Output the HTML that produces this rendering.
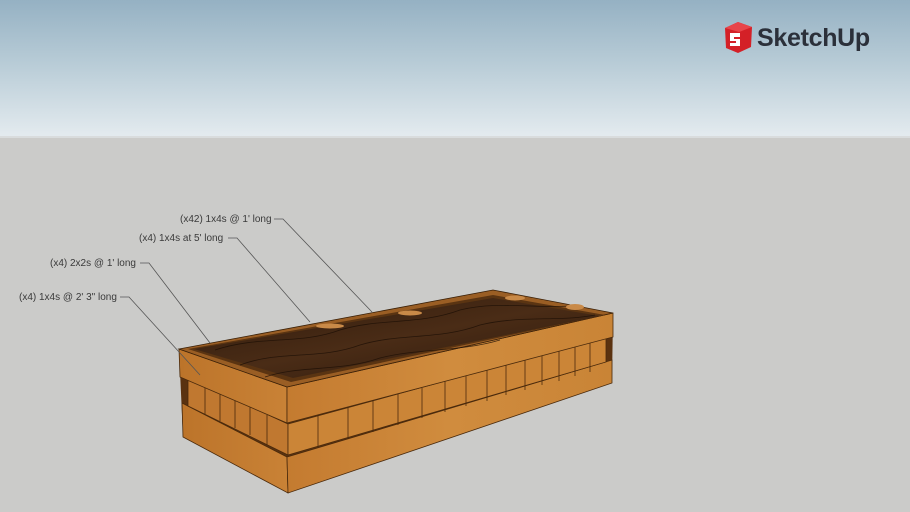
<!DOCTYPE html>
<html><head><meta charset="utf-8"><style>
html,body{margin:0;padding:0;width:910px;height:512px;overflow:hidden}
body{position:relative;background:#cbcbc9;font-family:"Liberation Sans",sans-serif}
.sky{position:absolute;left:0;top:0;width:910px;height:137px;background:linear-gradient(#95b1c3,#b7cbd6 45%,#e4ebef)}
.hz{position:absolute;left:0;top:136px;width:910px;height:2px;background:#d9dcdd}
.lbl{position:absolute;font-size:10px;color:#3a3a3a;white-space:nowrap;line-height:12px;font-family:"Liberation Sans",sans-serif}
.logo{position:absolute;left:757px;top:23px;font-family:"Liberation Sans",sans-serif;font-weight:bold;font-size:25px;line-height:30px;color:#2b303a;letter-spacing:-0.3px}
</style></head><body>
<div class="sky"></div><div class="hz"></div>
<svg width="910" height="512" style="position:absolute;left:0;top:0">
<defs>
<linearGradient id="wf" x1="0" y1="0" x2="1" y2="0"><stop offset="0" stop-color="#c47b30"/><stop offset="0.5" stop-color="#d08c3e"/><stop offset="1" stop-color="#c98436"/></linearGradient>
<linearGradient id="wl" x1="0" y1="0" x2="1" y2="0"><stop offset="0" stop-color="#bc742a"/><stop offset="1" stop-color="#c98236"/></linearGradient>
<linearGradient id="soil" x1="0" y1="0" x2="1" y2="1"><stop offset="0" stop-color="#2e1a0c"/><stop offset="0.5" stop-color="#4a2c16"/><stop offset="1" stop-color="#2a170a"/></linearGradient>
</defs>
<!-- dark silhouette behind bands -->
<polygon points="179,349 493,290 613,313 612,383 288,493 183,437" fill="#5a3210"/>
<!-- bottom band -->
<polygon points="182,403 287,457 288,493 183,437" fill="url(#wl)" stroke="#4a2a0c" stroke-width="0.8"/>
<polygon points="287,457 612,360 612,383 288,493" fill="url(#wf)" stroke="#4a2a0c" stroke-width="0.8"/>
<!-- middle band -->
<polygon points="188,378 288,424 288,455 188,406" fill="#c07830" stroke="#4a2a0c" stroke-width="0.8"/>
<polygon points="288,424 606,337 606,362 288,455" fill="#cb8537" stroke="#4a2a0c" stroke-width="0.8"/>
<g stroke="#4a2a0c" stroke-width="0.8">
<line x1="205" y1="386" x2="205" y2="414"/><line x1="220" y1="393" x2="220" y2="421"/><line x1="235" y1="400" x2="235" y2="428"/><line x1="250" y1="407" x2="250" y2="435"/><line x1="267" y1="415" x2="267" y2="445"/>
<line x1="318" y1="416" x2="318" y2="447"/><line x1="348" y1="408" x2="348" y2="439"/><line x1="373" y1="401" x2="373" y2="432"/><line x1="398" y1="394" x2="398" y2="425"/><line x1="422" y1="388" x2="422" y2="418"/><line x1="445" y1="381" x2="445" y2="412"/><line x1="466" y1="376" x2="466" y2="406"/><line x1="487" y1="370" x2="487" y2="401"/><line x1="506" y1="365" x2="506" y2="395"/><line x1="525" y1="360" x2="525" y2="390"/><line x1="542" y1="355" x2="542" y2="385"/><line x1="559" y1="350" x2="559" y2="381"/><line x1="575" y1="346" x2="575" y2="376"/><line x1="590" y1="342" x2="590" y2="372"/>
</g>
<!-- top band -->
<polygon points="179,349 287,387 287,423 180,377" fill="url(#wl)" stroke="#4a2a0c" stroke-width="0.8"/>
<polygon points="287,387 613,313 613,337 287,423" fill="url(#wf)" stroke="#4a2a0c" stroke-width="0.8"/>
<!-- rim top -->
<polygon points="179,349 493,290 613,313 287,387" fill="#9a5e24" stroke="#3a2008" stroke-width="0.8"/>
<polygon points="188,349 493,295 605,315 291,382" fill="#5a3412"/>
<polygon points="194,349 493,298 600,316 293,378" fill="url(#soil)"/>
<g fill="none" stroke="#1e1006" stroke-width="0.8" opacity="0.8">
<path d="M215,350 C260,335 300,345 340,330 C380,318 420,325 460,310 C500,300 540,310 580,305"/>
<path d="M240,365 C280,350 320,360 360,345 C400,333 440,340 480,325 C520,315 560,322 595,315"/>
<path d="M265,377 C300,365 340,372 380,358 C420,348 460,352 500,340"/>
</g>
<g fill="#c98a48"><ellipse cx="330" cy="326" rx="14" ry="2.5"/><ellipse cx="410" cy="313" rx="12" ry="2.5"/><ellipse cx="515" cy="298" rx="10" ry="2.5"/><ellipse cx="575" cy="307" rx="9" ry="3"/></g>
<!-- leader lines -->
<g stroke="#555" stroke-width="0.8" fill="none">
<polyline points="274,219 283,219 372,312"/>
<polyline points="228,238 237,238 310,322"/>
<polyline points="140,263 149,263 210,343"/>
<polyline points="120,297 129,297 200,375"/>
</g>
<!-- logo cube -->
<polygon points="725,28 738,22 752,27 751,47 738,53 726,48" fill="#d42027"/>
<polygon points="725,28 738,22 752,27 739,32" fill="#e8454a"/>
<path d="M730,33 h10 v4 h-6 v2 h6 v7 h-10 v-3 h6 v-2 h-6z" fill="#fff"/>
</svg>
<div class="lbl" style="left:180px;top:214px">(x42) 1x4s @ 1' long</div>
<div class="lbl" style="left:139px;top:233px">(x4) 1x4s at 5' long</div>
<div class="lbl" style="left:50px;top:258px">(x4) 2x2s @ 1' long</div>
<div class="lbl" style="left:19px;top:292px">(x4) 1x4s @ 2' 3" long</div>
<div class="logo">SketchUp</div>
</body></html>
